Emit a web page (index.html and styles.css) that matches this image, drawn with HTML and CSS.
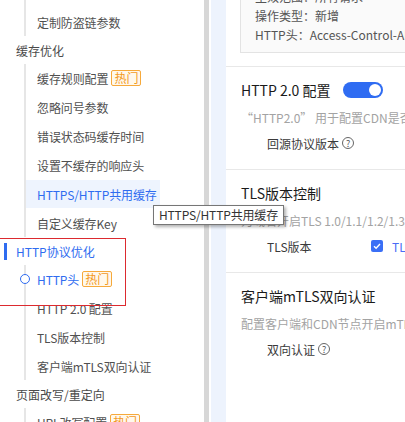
FILE: index.html
```html
<!DOCTYPE html>
<html lang="zh-CN">
<head>
<meta charset="utf-8">
<link rel="stylesheet" href="styles.css">
</head>
<body>
<div class="app">
  <nav class="sidebar">
    <div class="sidebar-inner">
      <div class="children">
        <div class="item">IP访问限频</div>
        <div class="item">定制防盗链参数</div>
      </div>
      <div class="group">缓存优化</div>
      <div class="children">
        <div class="item">缓存规则配置<span class="badge">热门</span></div>
        <div class="item">忽略问号参数</div>
        <div class="item">错误状态码缓存时间</div>
        <div class="item">设置不缓存的响应头</div>
        <div class="item hover">HTTPS/HTTP共用缓存</div>
        <div class="item">自定义缓存Key</div>
      </div>
      <div class="group active">HTTP协议优化</div>
      <div class="children">
        <div class="item current">HTTP头<span class="badge">热门</span></div>
        <div class="item">HTTP 2.0 配置</div>
        <div class="item">TLS版本控制</div>
        <div class="item">客户端mTLS双向认证</div>
      </div>
      <div class="group">页面改写/重定向</div>
      <div class="children">
        <div class="item">URL改写配置<span class="badge">热门</span></div>
      </div>
    </div>
  </nav>
  <div class="scrollbar"></div>
  <div class="rail"></div>
  <main class="main">
    <div class="main-inner">
      <div class="info-box">
        <div>生效范围：所有请求</div>
        <div>操作类型：新增</div>
        <div>HTTP头：Access-Control-Allow-Origin</div>
      </div>
      <section class="section">
        <div class="title-row">
          <span class="title">HTTP 2.0 配置</span>
          <span class="switch"></span>
        </div>
        <div class="desc">“HTTP2.0” 用于配置CDN是否使用HTTP2.0协议进行传输。</div>
        <div class="form-row">
          <span>回源协议版本</span><span class="help">?</span>
        </div>
      </section>
      <section class="section">
        <div class="title-row">
          <span class="title">TLS版本控制</span>
        </div>
        <div class="desc">为域名开启TLS 1.0/1.1/1.2/1.3版本。</div>
        <div class="form-row">
          <span class="label">TLS版本</span>
          <span class="checkbox"><svg width="12" height="12" viewBox="0 0 12 12"><path d="M3 6.2 L5.1 8.2 L9 4" fill="none" stroke="#fff" stroke-width="1.4"/></svg></span>
          <span class="check-text">TLS 1.0</span>
        </div>
      </section>
      <section class="section">
        <div class="title-row">
          <span class="title">客户端mTLS双向认证</span>
        </div>
        <div class="desc">配置客户端和CDN节点开启mTLS双向认证。</div>
        <div class="form-row">
          <span>双向认证</span><span class="help">?</span>
        </div>
      </section>
    </div>
  </main>
</div>
<div class="tooltip">HTTPS/HTTP共用缓存</div>
<div class="redbox"></div>
</body>
</html>
```

FILE: styles.css
```css
html, body {
  margin: 0;
  padding: 0;
  background: #fff;
}
body {
  font-family: "Noto Sans CJK SC", "Noto Sans", sans-serif;
  font-size: 12px;
  color: #333;
  width: 405px;
  height: 422px;
  overflow: hidden;
  position: relative;
}
.app {
  display: flex;
  height: 422px;
  overflow: hidden;
}
.sidebar {
  width: 204px;
  flex: none;
  background: #fff;
  overflow: hidden;
}
.sidebar-inner {
  margin-top: -21px;
}
.children {
  display: flex;
  flex-direction: column;
  align-items: flex-start;
  gap: 1px;
  margin-left: 24px;
  border-left: 2px solid #e6e6e6;
}
.item {
  position: relative;
  height: 28px;
  display: flex;
  align-items: center;
  padding: 0 3px 0 11px;
  color: #505050;
  white-space: nowrap;
  letter-spacing: -0.1px;
}
.item.hover {
  background: #eef4fe;
  color: #2f6cf0;
}
.item.current {
  color: #2f6cf0;
}
.item.current::before {
  content: "";
  position: absolute;
  left: -6px;
  top: 9px;
  width: 10px;
  height: 10px;
  box-sizing: border-box;
  border: 1.5px solid #2f6cf0;
  border-radius: 50%;
  background: #fff;
}
.badge {
  margin-left: 3px;
  height: 16px;
  box-sizing: border-box;
  padding: 0 2px;
  border: 1px solid #f6a93b;
  border-radius: 2px;
  background: #fff8ec;
  color: #f39a1e;
  line-height: 14px;
  font-size: 12px;
  letter-spacing: 0;
}
.group {
  position: relative;
  padding: 5px 0 3px 16px;
  line-height: 20px;
  color: #4a4a4a;
}
.group.active {
  color: #2f6cf0;
}
.group.active::before {
  content: "";
  position: absolute;
  left: 4px;
  top: 6px;
  width: 3px;
  height: 17px;
  background: #2f6cf0;
}
.scrollbar {
  width: 5px;
  flex: none;
  background: #d7d7d7;
}
.rail {
  width: 15px;
  flex: none;
  margin-left: 2px;
  background: #edf3fd;
}
.main {
  flex: 1;
  min-width: 0;
  overflow: hidden;
  background: #fff;
  white-space: nowrap;
}
.main-inner {
  margin-top: -22px;
  width: 300px;
}
.info-box {
  margin-left: 14px;
  border: 1px solid #e3e3e3;
  background: #fafafa;
  padding: 8px 14px;
  line-height: 19px;
  color: #555;
}
.section {
  margin-top: 13px;
  border-top: 1px solid #e8e8e8;
  padding: 13px 0 16px 15px;
}
.section + .section {
  margin-top: 0;
}
.title-row {
  display: flex;
  align-items: center;
  height: 20px;
}
.title {
  font-size: 14px;
  color: #1a1a1a;
  line-height: 20px;
}
.switch {
  position: relative;
  margin-left: 12px;
  width: 40px;
  height: 16px;
  border-radius: 8px;
  background: #2f6cf2;
}
.switch::after {
  content: "";
  position: absolute;
  right: 2px;
  top: 2px;
  width: 12px;
  height: 12px;
  border-radius: 50%;
  background: #fff;
}
.desc {
  margin-top: 8px;
  line-height: 20px;
  color: #a3a3a3;
}
.form-row {
  display: flex;
  align-items: center;
  margin-top: 5px;
  height: 20px;
  padding-left: 26px;
  color: #3a3a3a;
}
.label {
  width: 104px;
}
.help {
  display: inline-flex;
  align-items: center;
  justify-content: center;
  margin-left: 3px;
  width: 12px;
  height: 12px;
  box-sizing: border-box;
  border: 1px solid #666;
  border-radius: 50%;
  font-size: 9px;
  line-height: 1;
  color: #555;
}
.checkbox {
  display: inline-flex;
  width: 12px;
  height: 12px;
  border-radius: 2px;
  background: #3a6ff6;
}
.check-text {
  margin-left: 9px;
  color: #4a6cf6;
}
.tooltip {
  position: absolute;
  left: 153px;
  top: 205px;
  box-sizing: border-box;
  height: 20px;
  padding: 0 5px;
  border: 1px solid #767676;
  background: #fff;
  color: #333;
  line-height: 18px;
  white-space: nowrap;
  letter-spacing: -0.15px;
  box-shadow: 2px 2px 3px rgba(0, 0, 0, 0.3);
}
.redbox {
  position: absolute;
  left: -1px;
  top: 238px;
  width: 127px;
  height: 68px;
  box-sizing: border-box;
  border: 1px solid #dc2a2f;
}
```
